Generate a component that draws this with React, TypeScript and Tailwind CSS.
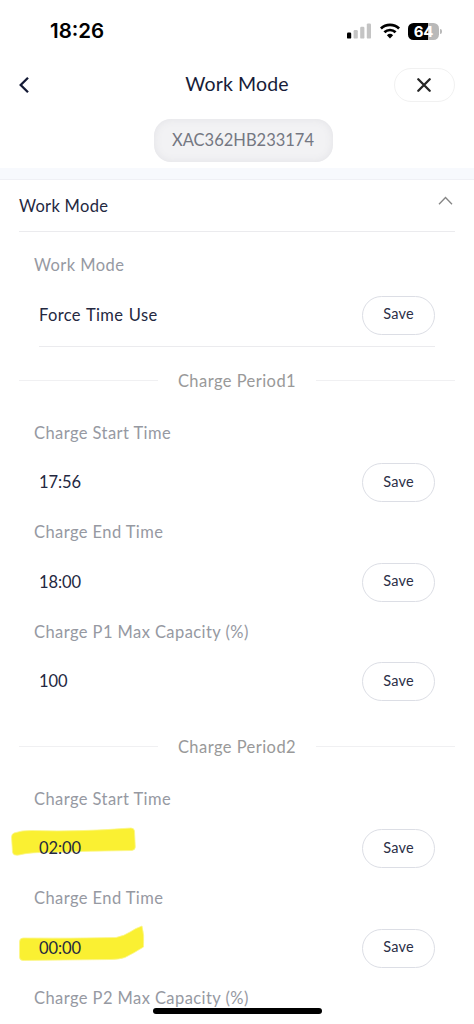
import { ReactNode } from "react"

function StatusBar() {
  return (
    <div className="flex h-[62px] items-center justify-between pl-[50px] pr-8">
      <span className="mt-px font-['Inter'] text-[20.5px] font-semibold leading-none text-black">18:26</span>
      <div className="flex items-center">
        <svg width="24" height="16" viewBox="0 0 24 16" className="mr-[9px]">
          <rect x="0" y="9.6" width="4.2" height="6" rx="1.2" fill="#000" />
          <rect x="6.6" y="7" width="4.2" height="8.6" rx="1.2" fill="#c4c4c4" />
          <rect x="13.2" y="3.8" width="4.2" height="11.8" rx="1.2" fill="#c4c4c4" />
          <rect x="19.8" y="0.4" width="4.2" height="15.2" rx="1.2" fill="#c4c4c4" />
        </svg>
        <svg width="20" height="16" viewBox="0 0 20 16" className="mr-[8px]" fill="none" stroke="#000" strokeWidth="2.7">
          <path d="M0.9 5.5a13 13 0 0 1 18.2 0" />
          <path d="M4.4 9.3a8 8 0 0 1 11.2 0" />
          <path d="M6.9 12.2a4.6 4.6 0 0 1 6.2 0L10 15.4z" fill="#000" stroke="none" />
        </svg>
        {/* Battery */}
        <div className="flex h-[17px] w-[31px] items-center justify-center rounded-[5.5px] bg-[linear-gradient(90deg,#000_64%,#b9b9b9_64%)]">
          <span className="font-['Inter'] text-[15px] font-bold leading-none tracking-[-0.3px] text-white">64</span>
        </div>
        <div className="ml-[1px] h-[5px] w-[2px] rounded-r-full bg-[#b9b9b9]" />
      </div>
    </div>
  )
}

function Header() {
  return (
    <div className="flex h-[46px] items-center justify-between pl-[19px] pr-[19px]">
      <svg width="61" height="18" viewBox="0 0 61 18" fill="none" stroke="#141a35" strokeWidth="2.3">
        <path d="M9 1.7L1.700 9L9 16.3" />
      </svg>
      <h1 className="mb-[2px] text-[19.5px] leading-none tracking-[0.15px] text-[#171c38]">Work Mode</h1>
      <button className="flex h-[34px] w-[61px] items-center justify-center rounded-full border border-[#f1f1f1]">
        <svg width="14" height="14" viewBox="0 0 14 14" stroke="#262626" strokeWidth="2.3" strokeLinecap="round">
          <path d="M1.3 1.3L12.7 12.7M12.7 1.3L1.3 12.7" />
        </svg>
      </button>
    </div>
  )
}

function Label({ children }: { children: ReactNode }) {
  return (
    <div className="flex h-[49.75px] items-center pl-[34px] pt-px text-[16.5px] tracking-[0.42px] text-[#9699a2]">
      {children}
    </div>
  )
}

function Field({ label, value, mark }: { label: string; value: string; mark?: ReactNode }) {
  return (
    <div>
      <Label>{label}</Label>
      <div className="relative flex h-[49.75px] items-center justify-between pl-[39px] pr-[39px] pt-px">
        {mark}
        <span className="relative text-[16.5px] tracking-[-0.1px] text-[#24283f] [word-spacing:1px]">
          {/\d/.test(value) ? value : <span className="tracking-[0.35px]">{value}</span>}
        </span>
        <button className="h-[39px] w-[73px] rounded-full border border-[#dcdee5] pb-[2px] text-[14.5px] tracking-[0.2px] text-[#2b2f47]">
          Save
        </button>
      </div>
    </div>
  )
}

function PeriodDivider({ children }: { children: ReactNode }) {
  return (
    <div className="flex h-[54px] items-center px-[19px] text-[16.5px] tracking-[0.45px] text-[#999999]">
      <div className="h-px flex-1 bg-[#f0f0f2]" />
      <span className="w-[158px] pt-px text-center">{children}</span>
      <div className="h-px flex-1 bg-[#f0f0f2]" />
    </div>
  )
}

// Highlighter strokes drawn behind the values
const startMark = (
  <svg className="absolute left-0 top-0" width="160" height="50" viewBox="0 824 160 50">
    <path
      d="M14 834Q22 831 32 831.5Q80 833 131 829Q134 829 134.500 832L135.300 848Q135.300 851 132 851.5Q90 852 50 853.500Q30 853 19 856Q13 857 12.500 853L11.500 838Q11.500 835 14 834Z"
      fill="#faf032" stroke="#fbf68a" strokeWidth="0.8"
    />
  </svg>
)

const endMark = (
  <svg className="absolute left-0 top-0 overflow-visible" width="160" height="50" viewBox="0 923 160 50">
    <path
      d="M23 938Q70 938.500 116 937.500Q124 936 130 932Q136 928 142 926Q144.500 935 143.500 947Q134 953 125 957.500Q119 959.500 110 959.500Q65 960 23 960.500Q19.500 960.500 19.500 957V942Q19.500 938 23 938Z"
      fill="#faf032" stroke="#fbf68a" strokeWidth="0.8"
    />
  </svg>
)

export default function App() {
  return (
    <div className="relative h-[1024px] w-[474px] overflow-hidden bg-white font-['Lato',sans-serif]">
      <StatusBar />
      <Header />
      <div className="flex h-[60px] justify-center pt-[11px]">
        <div className="flex h-[43px] w-[179px] translate-x-[6px] items-center justify-center rounded-[17px] bg-[#f2f2f4] text-[16.5px] text-[#747782] shadow-[inset_0_0_9px_#e2e2e6]">
          XAC362HB233174
        </div>
      </div>
      <div className="h-3 border-b border-[#eff0f5] bg-[#f7f9fd]" />

      <div className="mx-[19px] flex h-[52px] items-center justify-between border-b border-[#ebebee]">
        <span className="pt-[1.5px] text-[16.5px] tracking-[0.3px] text-[#24283f]">Work Mode</span>
        <svg width="15" height="10" viewBox="0 0 15 10" className="mb-[10px] mr-[2px]" fill="none" stroke="#858585" strokeWidth="1.3">
          <path d="M1 8.300L7.500 1.500L14 8.300" />
        </svg>
      </div>

      <div className="pt-[8px]">
        <Field label="Work Mode" value="Force Time Use" />
        <div className="mx-[39px] mt-[6px] h-px bg-[#ebebee]" />
      </div>

      <div className="pt-[7px]">
        <PeriodDivider>Charge Period1</PeriodDivider>
        <Field label="Charge Start Time" value="17:56" />
        <Field label="Charge End Time" value="18:00" />
        <Field label="Charge P1 Max Capacity (%)" value="100" />
      </div>

      <div className="pt-[13.700px]">
        <PeriodDivider>Charge Period2</PeriodDivider>
        <Field label="Charge Start Time" value="02:00" mark={startMark} />
        <Field label="Charge End Time" value="00:00" mark={endMark} />
        <Label>Charge P2 Max Capacity (%)</Label>
      </div>

      {/* Home indicator */}
      <div className="absolute bottom-[10px] left-[153px] h-[6px] w-[169px] rounded-full bg-black" />
    </div>
  )
}
